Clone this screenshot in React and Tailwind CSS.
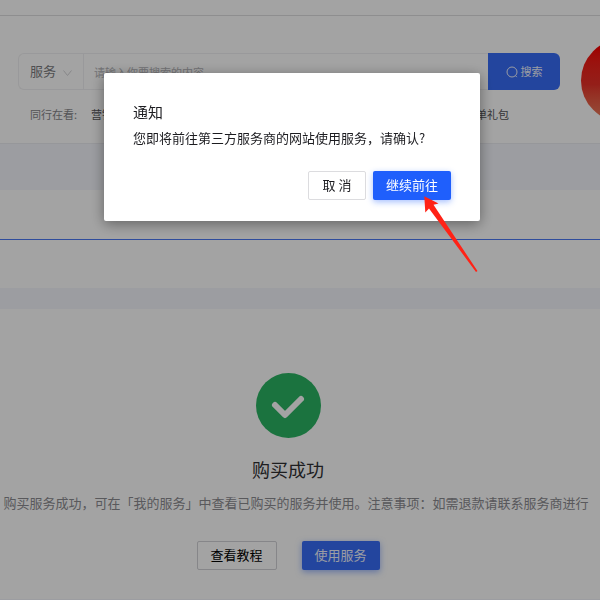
import React from "react";

function SearchBar() {
  return (
    <form className="flex h-[37px] w-[542px] shrink-0" onSubmit={(e) => e.preventDefault()}>
      <div className="flex min-w-0 flex-1 items-center rounded-l-md border border-r-0 border-[#f0f0f2]">
        <label className="relative flex h-full w-[65px] items-center border-r border-[#f0f0f2]">
          <span className="sr-only">类型</span>
          <select className="w-full appearance-none bg-transparent pb-0.5 pl-[11px] text-[13px] leading-5 text-[#7c7c80] outline-none">
            <option>服务</option>
          </select>
          <svg className="pointer-events-none absolute right-[11px] top-[15px]" width="9" height="8" viewBox="0 0 9 8" fill="none" stroke="#d4d4d8">
            <path d="M.5 1.5l4 5 4-5" />
          </svg>
        </label>
        <input
          aria-label="搜索内容"
          placeholder="请输入你要搜索的内容"
          className="min-w-0 flex-1 bg-transparent pl-[10px] text-[11px] leading-4 outline-none placeholder:text-[#b4b4b8]"
        />
      </div>
      <button className="flex w-[72px] items-center justify-center gap-[3px] rounded-r-md bg-[#376df8] text-[11px] text-[#f2f4ff]">
        <svg width="12" height="12" viewBox="0 0 12 12" fill="none" stroke="currentColor">
          <circle cx="6" cy="6" r="5" />
          <path d="M9.4 9.6l1.4 1.5" />
        </svg>
        搜索
      </button>
    </form>
  );
}

function Header() {
  return (
    <header className="h-[143px] bg-white">
      <div className="h-4 border-b border-[#dedee0]" />
      <div className="flex pl-[18px]">
        <div className="shrink-0 pt-[37px]">
          <SearchBar />
          <div className="flex justify-between pl-3 pr-[51px] pt-4 text-[11px] leading-4">
            <p className="flex gap-[14px] text-[#86868a]">
              同行在看: <a href="#marketing" className="text-[#56565a]">营销</a>
            </p>
            <a href="#gift" className="text-[#56565a]">单礼包</a>
          </div>
        </div>
        <div className="ml-[21px] mt-[23px] size-[83px] shrink-0 rounded-full bg-linear-to-b from-[#f80000] from-10% via-[#e83028] via-55% to-[#e88060]" />
      </div>
    </header>
  );
}

function PurchaseResult() {
  return (
    <section className="flex h-[290px] flex-col items-center bg-white pr-6 pt-16">
      <svg width="65" height="65" viewBox="0 0 65 65" fill="none">
        <circle cx="32.5" cy="32.5" r="32.5" fill="#2bb463" />
        <path d="M19 32l10 10 16-16" stroke="white" strokeWidth="6" strokeLinecap="round" strokeLinejoin="round" />
      </svg>
      <h1 className="mt-[19px] text-lg leading-6 text-[#303033]">购买成功</h1>
      <p className="mt-3 whitespace-nowrap pl-4 text-[13px] leading-5 text-[#8b8b90]">
        购买服务成功，可在「我的服务」中查看已购买的服务并使用。注意事项：如需退款请联系服务商进行
      </p>
      <div className="mt-7 flex gap-[25px]">
        <button className="h-[29px] w-20 rounded-xs border border-[#d2d2d6] bg-white pb-0.5 text-[13px] text-black">查看教程</button>
        <button className="h-[29px] w-[78px] rounded-xs bg-[#376df8] pb-0.5 text-[13px] text-[#f2f4ff] shadow-[0_2px_6px_rgba(55,109,248,0.5)]">使用服务</button>
      </div>
    </section>
  );
}

function ConfirmDialog() {
  return (
    <div className="fixed inset-0 flex items-start justify-center bg-black/36 pr-4 pt-[73px]">
      <div
        role="dialog"
        aria-modal="true"
        aria-labelledby="notice-title"
        className="relative flex h-[148px] w-[376px] flex-col rounded-xs bg-white px-[29px] pb-[21px] pt-[29px] shadow-[0_3px_14px_rgba(0,0,0,0.4)]"
      >
        <h2 id="notice-title" className="text-[15px] leading-5 text-[#1c1c20]">通知</h2>
        <p className="mt-1.5 whitespace-nowrap text-[13px] leading-5 text-[#1c1c20]">
          您即将前往第三方服务商的网站使用服务，请确认?
        </p>
        <div className="mt-auto flex justify-end gap-[7px]">
          <button className="h-[29px] w-[58px] rounded-xs border border-[#dcdcdf] bg-white pb-0.5 text-[13px] text-[#1c1c20]">取 消</button>
          <button className="h-[29px] w-[78px] rounded-xs bg-[#1f5ffc] pb-0.5 text-[13px] text-white shadow-[0_2px_6px_rgba(31,95,252,0.4)]">继续前往</button>
        </div>
        <svg className="pointer-events-none absolute left-80 top-[123px]" width="54" height="76" viewBox="0 0 54 76" fill="#ff2216">
          <path d="M.3.3L14.5 7.5 9.5 8.8 53.5 75 52 76 5 12.5 1.3 16.5z" />
        </svg>
      </div>
    </div>
  );
}

export default function App() {
  return (
    <div className="min-h-screen overflow-hidden bg-[#f4f6fc] font-['Noto_Sans_CJK_SC',sans-serif]">
      <Header />
      <div className="h-[47px] border-t border-[#ebecf1]" />
      <div className="h-[98px] bg-white">
        <div className="h-[50px] border-b border-[#4a78f5]" />
      </div>
      <div className="h-[21px]" />
      <PurchaseResult />
      <ConfirmDialog />
    </div>
  );
}
